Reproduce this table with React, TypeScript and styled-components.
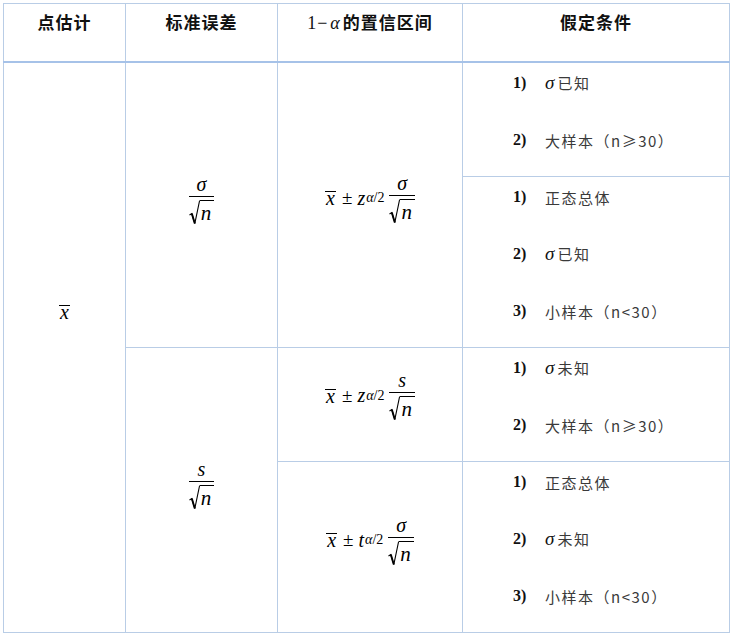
import React from 'react';
import styled, { createGlobalStyle } from 'styled-components';

const GlobalStyle = createGlobalStyle`
  html, body {
    margin: 0;
    padding: 0;
    background: #fff;
  }
  body {
    padding: 3px;
    font-family: "Noto Sans CJK SC", sans-serif;
  }
`;

const LINE = '#b9cde6';
const SERIF = `"Liberation Serif", "DejaVu Serif", serif`;

const Table = styled.table`
  border-collapse: collapse;
  table-layout: fixed;
  width: 726px;
  border: 1px solid ${LINE};
`;

const HeadCell = styled.th`
  height: 51px;
  padding: 6px 0 0;
  vertical-align: top;
  border: 1px solid ${LINE};
  border-bottom: 2px solid #a6c2e8;
  font-size: 17px;
  font-weight: 700;
  line-height: 24px;
  color: #111;
  letter-spacing: 1px;
`;

const Cell = styled.td<{ $lift?: number }>`
  border: 1px solid ${LINE};
  padding: 0 0 ${({ $lift }) => $lift ?? 0}px;
  vertical-align: middle;
  text-align: center;
`;

const CondCell = styled.td`
  border: 1px solid ${LINE};
  padding: 10px 0 0 50px;
  vertical-align: top;
`;

const CondLine = styled.div`
  display: flex;
  align-items: center;
  height: 20px;
  margin-bottom: 37px;
  font-size: 15px;
  color: #3a3a3a;
  letter-spacing: 1.5px;
  white-space: nowrap;

  &:last-child {
    margin-bottom: 26px;
  }
`;

const Num = styled.span`
  width: 32px;
  font-family: ${SERIF};
  font-weight: 700;
  font-size: 16px;
  letter-spacing: 0;
  color: #111;
`;

const Sigma = styled.span`
  font-family: ${SERIF};
  font-style: italic;
  font-size: 19px;
  letter-spacing: 0;
  color: #111;
  margin-right: 3px;
`;

const Formula = styled.span`
  display: inline-flex;
  align-items: center;
  font-family: ${SERIF};
  font-size: 20px;
  color: #000;
`;

const Var = styled.i`
  font-family: ${SERIF};
  font-style: italic;
`;

const XBar = styled.i`
  display: inline-block;
  font-family: ${SERIF};
  font-style: italic;
  line-height: 13px;
  border-top: 1px solid #000;
  padding: 0 1px;
`;

const Op = styled.span`
  font-family: ${SERIF};
  margin: 0 5px 0 6px;
  font-size: 19px;
`;

const Sub = styled.sub`
  font-family: ${SERIF};
  font-size: 14px;
  vertical-align: -6px;
  line-height: 0;
  margin: 0 5px 0 1px;
  i {
    font-style: italic;
  }
`;

const Frac = styled.span`
  display: inline-flex;
  flex-direction: column;
  align-items: center;
`;

const FracTop = styled.i`
  font-family: ${SERIF};
  font-style: italic;
  line-height: 20px;
  padding-bottom: 2px;
`;

const FracBar = styled.span`
  width: 100%;
  border-top: 1px solid #000;
  margin-bottom: 3px;
`;

const Radical = styled.span`
  display: inline-flex;
  align-items: stretch;
  height: 25px;
`;

const RadicalSign = styled.svg`
  width: 11px;
  height: 25px;
  display: block;
`;

const Radicand = styled.i`
  font-family: ${SERIF};
  font-style: italic;
  font-size: 21px;
  border-top: 1px solid #000;
  line-height: 25px;
  height: 24px;
  padding: 0 3px 0 1px;
`;

const HeadMath = styled.span`
  font-family: ${SERIF};
  font-weight: 400;
  font-size: 18px;
  i {
    font-style: italic;
    margin: 0 2px;
  }
`;

const SqrtN = () => (
  <Radical>
    <RadicalSign viewBox="0 0 11 25">
      <path d="M0.5 15 L2.8 13.6 L5.8 23.6 L10.6 0.5" fill="none" stroke="#000" strokeWidth="1.1" />
      <path d="M2.8 13.6 L5.8 23.6" fill="none" stroke="#000" strokeWidth="1.9" />
    </RadicalSign>
    <Radicand>n</Radicand>
  </Radical>
);

const Fraction = ({ top }: { top: string }) => (
  <Frac>
    <FracTop>{top}</FracTop>
    <FracBar />
    <SqrtN />
  </Frac>
);

const Interval = ({ stat, top }: { stat: string; top: string }) => (
  <Formula>
    <XBar>x</XBar>
    <Op>±</Op>
    <Var>{stat}</Var>
    <Sub>
      <i>α</i>/2
    </Sub>
    <Fraction top={top} />
  </Formula>
);

const Cond = ({ items }: { items: React.ReactNode[] }) => (
  <CondCell>
    {items.map((it, i) => (
      <CondLine key={i}>
        <Num>{i + 1})</Num>
        {it}
      </CondLine>
    ))}
  </CondCell>
);

const known = (
  <span>
    <Sigma>σ</Sigma>已知
  </span>
);
const unknown = (
  <span>
    <Sigma>σ</Sigma>未知
  </span>
);

const App = () => (
  <>
    <GlobalStyle />
    <Table>
      <colgroup>
        <col style={{ width: 122 }} />
        <col style={{ width: 152 }} />
        <col style={{ width: 185 }} />
        <col style={{ width: 267 }} />
      </colgroup>
      <thead>
        <tr>
          <HeadCell>点估计</HeadCell>
          <HeadCell>标准误差</HeadCell>
          <HeadCell>
            <HeadMath>
              1−<i>α</i>
            </HeadMath>
            的置信区间
          </HeadCell>
          <HeadCell>假定条件</HeadCell>
        </tr>
      </thead>
      <tbody>
        <tr>
          <Cell rowSpan={4} $lift={72}>
            <Formula>
              <XBar>x</XBar>
            </Formula>
          </Cell>
          <Cell rowSpan={2} $lift={14}>
            <Formula>
              <Fraction top="σ" />
            </Formula>
          </Cell>
          <Cell rowSpan={2} $lift={14}>
            <Interval stat="z" top="σ" />
          </Cell>
          <Cond items={[known, '大样本（n≥30）']} />
        </tr>
        <tr>
          <Cond items={['正态总体', known, '小样本（n<30）']} />
        </tr>
        <tr>
          <Cell rowSpan={2} $lift={14}>
            <Formula>
              <Fraction top="s" />
            </Formula>
          </Cell>
          <Cell $lift={18}>
            <Interval stat="z" top="s" />
          </Cell>
          <Cond items={[unknown, '大样本（n≥30）']} />
        </tr>
        <tr>
          <Cell $lift={14}>
            <Interval stat="t" top="σ" />
          </Cell>
          <Cond items={['正态总体', unknown, '小样本（n<30）']} />
        </tr>
      </tbody>
    </Table>
  </>
);

export default App;
